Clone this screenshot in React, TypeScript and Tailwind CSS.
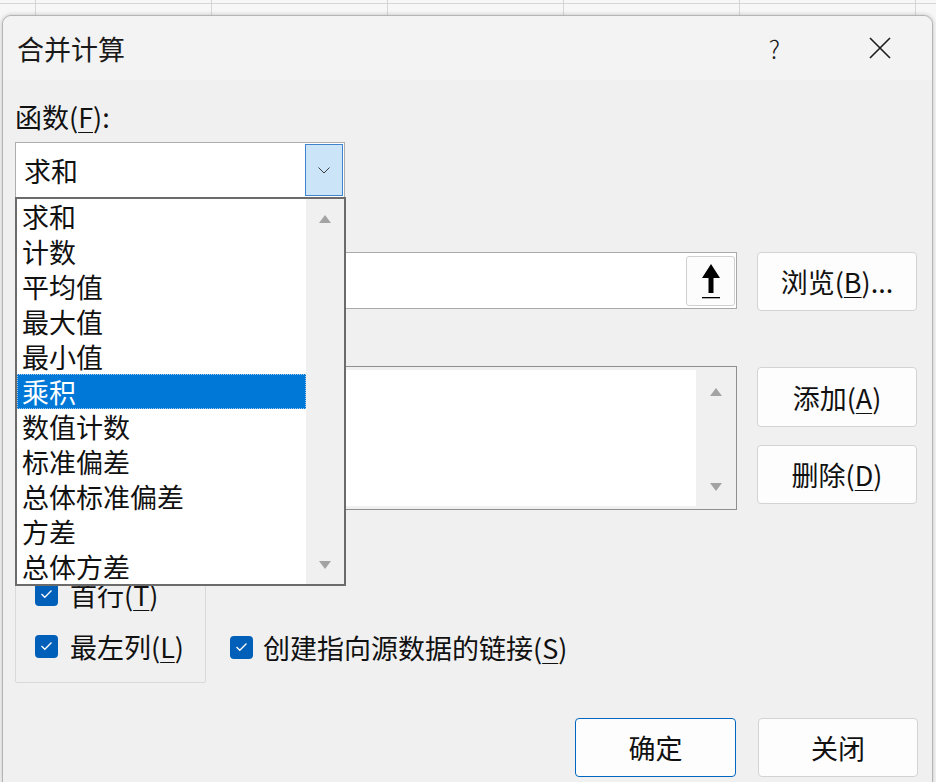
import React from "react";

const items = [
  "求和",
  "计数",
  "平均值",
  "最大值",
  "最小值",
  "乘积",
  "数值计数",
  "标准偏差",
  "总体标准偏差",
  "方差",
  "总体方差",
];

function Key({ k }: { k: string }) {
  return <span className="underline decoration-1 underline-offset-[4px]">{k}</span>;
}

function UpTri() {
  return (
    <svg width="12" height="8" viewBox="0 0 12 8">
      <polygon points="6,0 12,8 0,8" fill="#a3a3a3" />
    </svg>
  );
}

function DownTri() {
  return (
    <svg width="12" height="8" viewBox="0 0 12 8">
      <polygon points="0,0 12,0 6,8" fill="#a3a3a3" />
    </svg>
  );
}

function Check() {
  return (
    <div className="flex h-[23px] w-[23px] shrink-0 items-center justify-center rounded-[4px] bg-[#005fb8]">
      <svg width="13" height="10" viewBox="0 0 13 10">
        <polyline points="1.5,5 4.8,8.3 11.5,1.5" fill="none" stroke="#ffffff" strokeWidth="1.3" />
      </svg>
    </div>
  );
}

function Btn({ children, primary }: { children: React.ReactNode; primary?: boolean }) {
  return (
    <div
      className={
        primary
          ? "flex h-[59px] w-[161px] items-center justify-center rounded-[4px] border border-[#0067c0] bg-[#fdfdfd] text-[27px] leading-none"
          : "flex h-[59px] w-[160px] items-center justify-center rounded-[4px] border border-[#d3d3d3] bg-[#fdfdfd] text-[27px] leading-none"
      }
    >
      {children}
    </div>
  );
}

export default function App() {
  return (
    <div className="relative h-[782px] w-[936px] overflow-hidden bg-[#f7f7f7] font-['Noto_Sans_CJK_SC',sans-serif] text-[#111111]">
      {/* spreadsheet grid behind the dialog */}
      <div className="absolute inset-0 flex">
        <div className="w-[36px] shrink-0 border-r border-[#d6d6d6]" />
        <div className="w-[176px] shrink-0 border-r border-[#d6d6d6]" />
        <div className="w-[176px] shrink-0 border-r border-[#d6d6d6]" />
        <div className="w-[176px] shrink-0 border-r border-[#d6d6d6]" />
        <div className="w-[176px] shrink-0 border-r border-[#d6d6d6]" />
        <div className="w-[176px] shrink-0 border-r border-[#d6d6d6]" />
      </div>
      <div className="absolute left-0 right-0 top-[3px] h-px bg-[#d6d6d6]" />

      {/* dialog window */}
      <div className="relative ml-[2px] mt-[15px] h-[800px] w-[931px] rounded-t-[9px] border border-[#b4b4b4] bg-[#f0f0f0] shadow-[0_0_5px_rgba(0,0,0,0.22)]">
        {/* title bar */}
        <div className="flex h-[64px] items-center rounded-t-[9px] bg-[#f3f3f3]">
          <div className="pl-[14px] text-[27px] leading-none text-[#1a1a1a]">合并计算</div>
          <div className="ml-auto flex w-[105px] justify-center text-[25px] font-light leading-none text-[#1a1a1a]">?</div>
          <div className="flex w-[105px] justify-center">
            <svg width="22" height="22" viewBox="0 0 22 22">
              <path d="M1 1 L21 21 M21 1 L1 21" stroke="#1a1a1a" strokeWidth="1.6" />
            </svg>
          </div>
        </div>

        {/* body */}
        <div className="flex flex-col pl-[12px] pr-[14px]">
          <div className="mt-[20px] h-[34px] text-[27px] leading-[34px]">
            函数(<Key k="F" />):
          </div>

          {/* combo box with open dropdown */}
          <div className="relative mt-[8px] w-[330px]">
            <div className="flex h-[56px] w-[330px] items-stretch border border-[#adadad] bg-white p-[1px]">
              <div className="flex flex-1 items-center pl-[7px] text-[27px] leading-none">求和</div>
              <div className="flex w-[38px] items-center justify-center border border-[#3f83cc] bg-[#cce4f7]">
                <svg width="12" height="7" viewBox="0 0 12 7">
                  <polyline points="0.5,0.5 6,6 11.5,0.5" fill="none" stroke="#3a3a3a" strokeWidth="1" />
                </svg>
              </div>
            </div>

            <div className="absolute left-0 top-[55px] z-20 flex w-[331px] border-2 border-[#6b6b6b] bg-white">
              <div className="flex w-[289px] flex-col">
                {items.map((it) =>
                  it === "乘积" ? (
                    <div
                      key={it}
                      className="flex h-[35px] items-center border border-dotted border-[#9cc8ee] bg-[#0078d7] pl-[4px] text-[27px] leading-none text-white"
                    >
                      {it}
                    </div>
                  ) : (
                    <div key={it} className="flex h-[35px] items-center pl-[5px] text-[27px] leading-none">
                      {it}
                    </div>
                  )
                )}
              </div>
              <div className="flex w-[38px] flex-col items-center justify-between bg-[#f0f0f0] pb-[15px] pt-[16px]">
                <UpTri />
                <DownTri />
              </div>
            </div>
          </div>

          {/* space of the reference label (covered by the open list) */}
          <div className="mt-[14px] h-[34px]" />

          {/* reference row */}
          <div className="mt-[6px] flex items-start gap-[20px]">
            <div className="flex h-[57px] w-[722px] items-center justify-end border border-[#a9a9a9] bg-white pr-[1px]">
              <div className="flex h-[50px] w-[49px] items-center justify-center rounded-[3px] border border-[#d0d0d0] bg-[#fcfcfc]">
                <svg width="22" height="36" viewBox="0 0 22 36">
                  <polygon points="11,1 2,15 8.5,15 8.5,30 13.5,30 13.5,15 20,15" fill="#000000" />
                  <rect x="2" y="34" width="18" height="1.3" fill="#000000" />
                </svg>
              </div>
            </div>
            <Btn>
              浏览(<Key k="B" />)...
            </Btn>
          </div>

          {/* space of the all-references label (covered by the open list) */}
          <div className="mt-[15px] h-[34px]" />

          {/* all references row */}
          <div className="mt-[6px] flex items-start gap-[20px]">
            <div className="flex h-[144px] w-[722px] border border-[#8f8f8f] bg-[#f0f0f0] py-[3px] pl-[3px]">
              <div className="flex-1 bg-white" />
              <div className="flex w-[40px] flex-col items-center justify-between pb-[15px] pt-[18px]">
                <UpTri />
                <DownTri />
              </div>
            </div>
            <div className="mt-[1px] flex flex-col gap-[18px]">
              <div className="flex h-[60px] w-[160px] items-center justify-center rounded-[4px] border border-[#d3d3d3] bg-[#fdfdfd] text-[27px] leading-none">
                添加(<Key k="A" />)
              </div>
              <Btn>
                删除(<Key k="D" />)
              </Btn>
            </div>
          </div>

          {/* label position group + link option */}
          <div className="mt-[30px] flex items-end gap-[24px]">
            <div className="flex h-[143px] w-[191px] flex-col gap-[18px] rounded-[2px] border border-[#d9d9d9] pl-[19px] pt-[36px]">
              <div className="flex h-[34px] items-center gap-[12px] text-[27px] leading-none">
                <Check />
                <span>
                  首行(<Key k="T" />)
                </span>
              </div>
              <div className="flex h-[34px] items-center gap-[12px] text-[27px] leading-none">
                <Check />
                <span>
                  最左列(<Key k="L" />)
                </span>
              </div>
            </div>
            <div className="mb-[19px] flex h-[34px] items-center gap-[10px] text-[27px] leading-none">
              <Check />
              <span>
                创建指向源数据的链接(<Key k="S" />)
              </span>
            </div>
          </div>

          {/* bottom buttons */}
          <div className="mt-[35px] flex justify-end gap-[22px]">
            <Btn primary>确定</Btn>
            <Btn>关闭</Btn>
          </div>
        </div>
      </div>
    </div>
  );
}
